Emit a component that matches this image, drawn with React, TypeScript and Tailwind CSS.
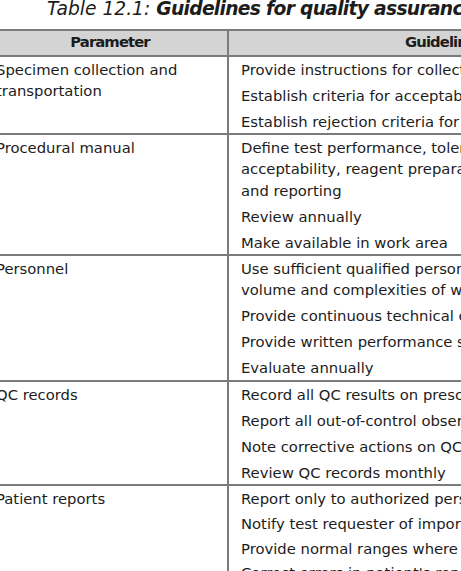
import React from 'react';

type Row = {
  param: string[];
  items: string[][];
  tight?: boolean;
};

const rows: Row[] = [
  {
    param: ['Specimen collection and', 'transportation'],
    items: [
      ['Provide instructions for collection and handling'],
      ['Establish criteria for acceptable specimens'],
      ['Establish rejection criteria for unacceptable specimens'],
    ],
  },
  {
    param: ['Procedural manual'],
    items: [
      ['Define test performance, tolerance limits, specimen', 'acceptability, reagent preparation, QC, calculations,', 'and reporting'],
      ['Review annually'],
      ['Make available in work area'],
    ],
  },
  {
    param: ['Personnel'],
    items: [
      ['Use sufficient qualified personnel for', 'volume and complexities of work'],
      ['Provide continuous technical education'],
      ['Provide written performance standards'],
      ['Evaluate annually'],
    ],
  },
  {
    param: ['QC records'],
    items: [
      ['Record all QC results on prescribed forms'],
      ['Report all out-of-control observations to supervisor'],
      ['Note corrective actions on QC records'],
      ['Review QC records monthly'],
    ],
  },
  {
    param: ['Patient reports'],
    tight: true,
    items: [
      ['Report only to authorized persons'],
      ['Notify test requester of important values'],
      ['Provide normal ranges where appropriate'],
      ["Correct errors in patient's reports"],
    ],
  },
];

const Lines: React.FC<{ lines: string[] }> = ({ lines }) => (
  <div className="whitespace-nowrap">
    {lines.map((l, i) => (
      <div key={i}>{l}</div>
    ))}
  </div>
);

export default function App() {
  return (
    <div className="w-[461px] h-[571px] overflow-hidden bg-white text-[#1c1c1c] font-['DejaVu_Sans',sans-serif]">
      <div className="pl-[47px] text-[18.7px] leading-[17px] italic whitespace-nowrap mb-[12px]">
        Table 12.1: <span className="font-bold tracking-[-0.7px]">Guidelines for quality assurance</span>
      </div>

      <div className="-ml-[17px] w-[671px] border-2 border-[#7b7b7b] text-[14.8px] leading-[21.3px]">
        {/* header */}
        <div className="flex bg-[#d4d4d4] border-b-2 border-[#7b7b7b] font-bold tracking-[-0.9px]">
          <div className="w-[244px] shrink-0 border-r-2 border-[#7b7b7b] pl-[8px] pb-[2.7px] text-center">
            Parameter
          </div>
          <div className="flex-1 pl-[8px] pb-[2.7px] text-center">Guidelines</div>
        </div>

        {rows.map((row, i) => (
          <div key={i} className="flex border-b-2 border-[#7b7b7b]">
            <div className="w-[244px] shrink-0 border-r-2 border-[#7b7b7b] pl-[11px] pt-[1.6px] pb-[1.4px]">
              <Lines lines={row.param} />
            </div>
            <div
              className={
                row.tight
                  ? 'flex-1 pl-[12px] pt-[1.6px] pb-[1.4px] flex flex-col gap-[3.5px]'
                  : 'flex-1 pl-[12px] pt-[1.6px] pb-[1.4px] flex flex-col gap-[4.75px]'
              }
            >
              {row.items.map((item, j) => (
                <Lines key={j} lines={item} />
              ))}
            </div>
          </div>
        ))}
      </div>
    </div>
  );
}
